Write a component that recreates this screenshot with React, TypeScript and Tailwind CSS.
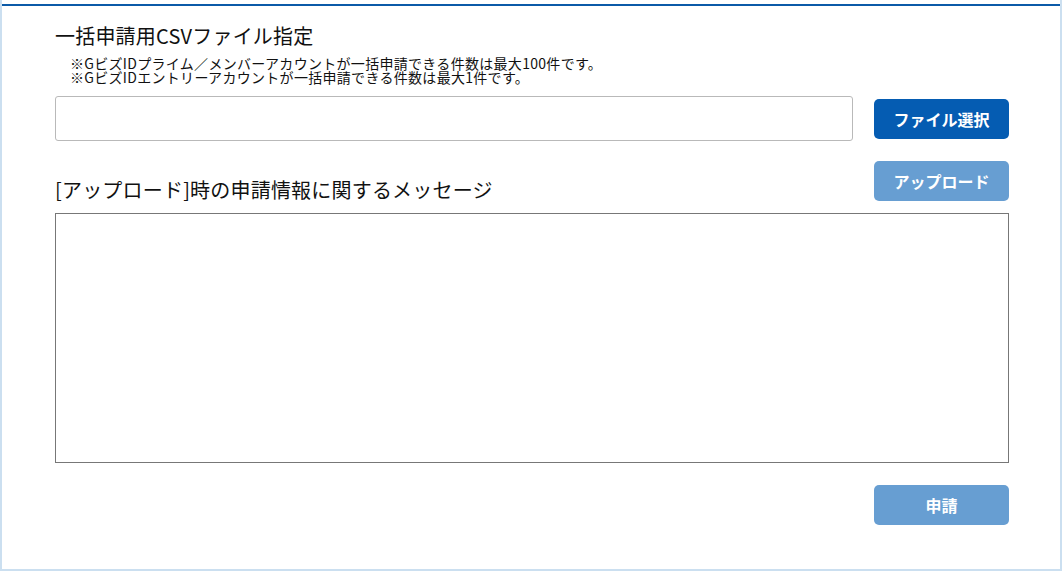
import React from 'react';

const font = { fontFamily: '"Noto Sans CJK JP", "Noto Sans", sans-serif' };

export default function App() {
  return (
    <div
      className="h-[571px] w-[1062px] bg-white border-x-2 border-b-2 border-[#cbdff0] pt-1 text-[#111]"
      style={font}
    >
      <div className="border-t-2 border-[#0b5aa8] pl-[53px] pr-[51px]">
        {/* CSV file */}
        <h2 className="pt-4 text-[20px] leading-[28px] font-normal tracking-[0.2px]">一括申請用CSVファイル指定</h2>
        <div className="mt-[6px] pl-[15px] text-[14px] leading-[14px] tracking-[0.3px]">
          <p>※GビズIDプライム／メンバーアカウントが一括申請できる件数は最大100件です。</p>
          <p>※GビズIDエントリーアカウントが一括申請できる件数は最大1件です。</p>
        </div>
        <div className="mt-3 flex items-center gap-[21px]">
          <input
            type="text"
            className="h-[45px] flex-1 rounded-[3px] border border-[#b9b9b9] bg-white px-2 outline-none"
          />
          <button className="h-10 w-[135px] rounded-[5px] bg-[#055cb2] text-[16px] font-bold text-white">
            ファイル選択
          </button>
        </div>

        {/* upload + messages */}
        <div className="mt-5 flex items-end justify-between">
          <h2 className="-mb-[3px] text-[20px] leading-[28px] font-normal tracking-[0.2px]">
            [アップロード]時の申請情報に関するメッセージ
          </h2>
          <button className="h-10 w-[135px] rounded-[5px] bg-[#679ed2] text-[16px] font-bold text-white">
            アップロード
          </button>
        </div>
        <textarea
          readOnly
          className="mt-3 block h-[250px] w-full resize-none border border-[#777] bg-white p-2 outline-none"
        />
        <div className="mt-[22px] flex justify-end">
          <button className="h-10 w-[135px] rounded-[5px] bg-[#679ed2] text-[16px] font-bold text-white">
            申請
          </button>
        </div>
      </div>
    </div>
  );
}
